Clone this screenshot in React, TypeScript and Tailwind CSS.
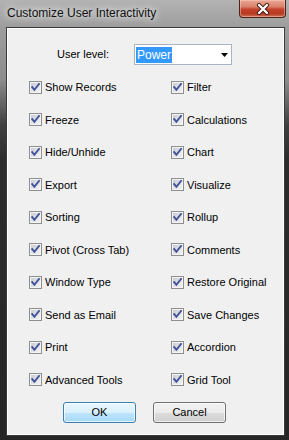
import React from "react";

const left = [
  "Show Records",
  "Freeze",
  "Hide/Unhide",
  "Export",
  "Sorting",
  "Pivot (Cross Tab)",
  "Window Type",
  "Send as Email",
  "Print",
  "Advanced Tools",
];
const right = [
  "Filter",
  "Calculations",
  "Chart",
  "Visualize",
  "Rollup",
  "Comments",
  "Restore Original",
  "Save Changes",
  "Accordion",
  "Grid Tool",
];

function Check() {
  return (
    <svg width="13" height="13" viewBox="0 0 13 13" className="shrink-0 block">
      <defs>
        <linearGradient id="cbg" x1="0" y1="0" x2="1" y2="1">
          <stop offset="0" stopColor="#c9ccd2" />
          <stop offset="1" stopColor="#f3f3f4" />
        </linearGradient>
      </defs>
      <rect x="0.5" y="0.5" width="12" height="12" fill="#f4f4f4" stroke="#8e8f8f" />
      <rect x="2" y="2" width="9" height="9" fill="url(#cbg)" />
      <path d="M3.2 6.2 L5.4 8.8 L10 3" fill="none" stroke="#3f519a" strokeWidth="1.9" strokeLinecap="square" />
    </svg>
  );
}

function Item({ label }: { label: string }) {
  return (
    <div className="flex items-center h-[32.5px] gap-[3px]">
      <Check />
      <span>{label}</span>
    </div>
  );
}

export default function App() {
  return (
    <div
      className="relative w-[289px] h-[440px] overflow-hidden bg-[linear-gradient(to_bottom,#b3b3b3_0px,#9e9e9e_26px,#8c8c8c_80px,#404040_125px,#2c2c2c_160px,#262626_100%)] pt-[27px] pl-[6px] pr-[4px] pb-[4px] flex flex-col"
      style={{ fontFamily: '"Liberation Sans", Arial, sans-serif' }}
    >
      {/* title */}
      <div className="absolute left-[7px] top-[5px] text-[12px] leading-[16px] text-[#111] [text-shadow:0_0_6px_#ffffff,0_0_10px_#e0e0e0]">
        Customize User Interactivity
      </div>
      {/* close button */}
      <div className="absolute left-[239px] top-0 w-[47px] h-[18px] rounded-b-[4px] border border-t-0 border-[#4a2418] bg-[linear-gradient(to_bottom,#e9a794_0%,#d9806a_40%,#c4402a_55%,#b53a22_80%,#d27256_100%)] shadow-[inset_0_0_0_1px_rgba(255,210,200,0.45)] flex items-center justify-center">
        <svg width="14" height="12" viewBox="0 0 14 12">
          <path d="M3 2 L11 10 M11 2 L3 10" stroke="#3a160c" strokeWidth="4" strokeLinecap="round" />
          <path d="M3 2 L11 10 M11 2 L3 10" stroke="#ffffff" strokeWidth="2.4" strokeLinecap="round" />
        </svg>
      </div>

      {/* client panel */}
      <div className="flex-1 border border-[#3a3a3a]">
        <div className="h-full border border-white bg-[#f0f0f0] text-[11px] text-black flex flex-col">
          <div className="mt-[15px] flex items-center h-[21px] pl-[49px]">
            <span className="w-[77px]">User level:</span>
            <div className="relative w-[98px] h-[21px] border border-[#abb4c4] bg-white flex items-center pl-[1px]">
              <span className="bg-[#3399ff] text-white h-[16px] leading-[16px] px-[1px] text-[12px]">Power</span>
              <svg width="7" height="4" viewBox="0 0 7 4" className="absolute left-[86px] top-[8px]">
                <path d="M0 0 H7 L3.5 4 Z" fill="#000" />
              </svg>
            </div>
          </div>

          <div className="mt-[6px] pl-[21px] grid grid-cols-[142px_1fr]">
            <div className="flex flex-col">
              {left.map((l) => (
                <Item key={l} label={l} />
              ))}
            </div>
            <div className="flex flex-col">
              {right.map((l) => (
                <Item key={l} label={l} />
              ))}
            </div>
          </div>

          <div className="mt-[6px] flex pl-[55px] gap-[17px]">
            <div className="w-[73px] h-[21px] rounded-[3px] border border-[#3c7fb1] bg-[linear-gradient(to_bottom,#eaf6fd_0%,#d9f0fc_50%,#bee6fd_50%,#a7d9f5_100%)] shadow-[inset_0_0_0_1px_rgba(255,255,255,0.7)] flex items-center justify-center">
              OK
            </div>
            <div className="w-[73px] h-[21px] rounded-[3px] border border-[#707070] bg-[linear-gradient(to_bottom,#f2f2f2_0%,#ebebeb_50%,#dddddd_50%,#cfcfcf_100%)] shadow-[inset_0_0_0_1px_rgba(255,255,255,0.7)] flex items-center justify-center">
              Cancel
            </div>
          </div>
        </div>
      </div>
    </div>
  );
}
